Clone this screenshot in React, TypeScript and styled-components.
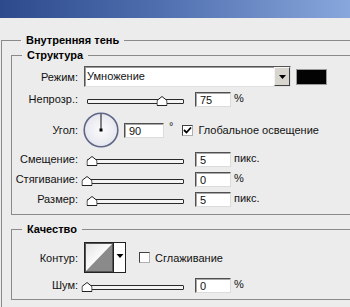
import styled, { createGlobalStyle } from "styled-components";

const GlobalStyle = createGlobalStyle`
  html, body { margin: 0; padding: 0; }
  body {
    background: #ececec;
    font-family: "Liberation Sans", Arial, sans-serif;
    font-size: 11px;
    color: #111;
  }
`;

const Window = styled.div`
  width: 350px;
  height: 307px;
  overflow: hidden;
  background: #ececec;
  display: flex;
  flex-direction: column;
`;

const TitleBar = styled.div`
  height: 18px;
  flex: none;
  background: linear-gradient(to right, #2d4b8c 0%, #4e6eae 45%, #88a7dc 100%);
`;

const Body = styled.div`
  width: 420px;
  padding: 16px 0 0 1px;
`;

const Group = styled.fieldset<{ $top?: number; $pt?: number; $pb?: number; $pl?: number }>`
  margin: ${(p) => p.$top ?? 0}px 0 0 0;
  padding: ${(p) => p.$pt ?? 0}px 0 ${(p) => p.$pb ?? 0}px ${(p) => p.$pl ?? 0}px;
  border: 1px solid #8a8a8a;
  border-right: none;
  min-width: 0;
`;

const Legend = styled.legend`
  margin-left: 10px;
  padding: 0 5px;
  font-weight: bold;
  line-height: 13px;
  color: #000;
`;

const Rows = styled.div<{ $gap?: number }>`
  display: flex;
  flex-direction: column;
  gap: ${(p) => p.$gap ?? 0}px;
`;

const Row = styled.div<{ $h: number }>`
  display: flex;
  align-items: center;
  height: ${(p) => p.$h}px;
`;

const Label = styled.span`
  flex: none;
  width: 66px;
  margin-right: 6px;
  text-align: right;
  white-space: nowrap;
`;

const Select = styled.div`
  box-sizing: border-box;
  width: 207px;
  height: 21px;
  display: flex;
  border: 1px solid;
  border-color: #555 #e0e0e0 #e0e0e0 #555;
  box-shadow: inset 1px 1px 0 #9a9a9a;
  background: #fff;
`;

const SelectText = styled.span`
  flex: 1;
  padding: 3px 0 0 2px;
`;

const DropButton = styled.span`
  box-sizing: border-box;
  width: 16px;
  background: #d8d5cf;
  border: 1px solid;
  border-color: #f4f4f4 #404040 #404040 #f4f4f4;
  display: flex;
  align-items: center;
  justify-content: center;
`;

const Swatch = styled.div`
  box-sizing: border-box;
  width: 31px;
  height: 16px;
  margin-left: 5px;
  background: #030303;
  border: 1px solid #9a9a9a;
`;

const Slider = styled.div`
  position: relative;
  flex: none;
  width: 97px;
  height: 18px;
  margin-left: 3px;
`;

const Track = styled.div`
  box-sizing: border-box;
  margin-top: 9px;
  height: 5px;
  border: 1px solid #2a2a2a;
  border-radius: 1px;
  background: #f4f4f4;
`;

const Thumb = styled.svg`
  position: absolute;
  top: 6px;
  transform: translateX(-50%);
`;

const Field = styled.div<{ $w: number; $ml: number }>`
  box-sizing: border-box;
  flex: none;
  width: ${(p) => p.$w}px;
  height: 15px;
  margin-left: ${(p) => p.$ml}px;
  padding: 1px 0 0 4px;
  background: #fff;
  border: 1px solid;
  border-color: #505050 #dcdcdc #dcdcdc #505050;
  box-shadow: inset 1px 1px 0 #a8a8a8;
  line-height: 12px;
`;

const Unit = styled.span<{ $raised?: boolean }>`
  margin-left: ${(p) => (p.$raised ? 5 : 3)}px;
  margin-bottom: ${(p) => (p.$raised ? 8 : 3)}px;
`;

const Dial = styled.svg`
  flex: none;
  margin-left: -1px;
`;

const Check = styled.span<{ $ml: number }>`
  box-sizing: border-box;
  flex: none;
  width: 11px;
  height: 11px;
  margin-left: ${(p) => p.$ml}px;
  margin-right: 5px;
  background: #fff;
  border: 1px solid;
  border-color: #404040 #b0b0b0 #b0b0b0 #404040;
  display: flex;
  align-items: center;
  justify-content: center;
`;

const Contour = styled.svg`
  flex: none;
`;

function SliderBar({ value }: { value: number }) {
  return (
    <Slider>
      <Track />
      <Thumb width="11" height="10" viewBox="0 0 11 10" style={{ left: `${value}%` }}>
        <path d="M0.5 9.5 V4.5 L5.5 0.5 L10.5 4.5 V9.5 Z" fill="#fff" stroke="#222" />
      </Thumb>
    </Slider>
  );
}

function CheckMark() {
  return (
    <svg width="9" height="9" viewBox="0 0 9 9">
      <path d="M1 4 L3.5 6.5 L8 1.5" fill="none" stroke="#000" strokeWidth="1.8" />
    </svg>
  );
}

export default function App() {
  return (
    <Window>
      <GlobalStyle />
      <TitleBar />
      <Body>
        <Group $pt={2} $pl={9} $pb={20}>
          <Legend>Внутренняя тень</Legend>

          <Group $pt={4} $pb={6}>
            <Legend>Структура</Legend>
            <Rows>
              <Row $h={21}>
                <Label>Режим:</Label>
                <Select>
                  <SelectText>Умножение</SelectText>
                  <DropButton>
                    <svg width="7" height="4" viewBox="0 0 7 4">
                      <path d="M0 0 H7 L3.5 4 Z" fill="#000" />
                    </svg>
                  </DropButton>
                </Select>
                <Swatch />
              </Row>
              <Row $h={18} style={{ marginTop: 3 }}>
                <Label>Непрозр.:</Label>
                <SliderBar value={77} />
                <Field $w={36} $ml={11}>75</Field>
                <Unit>%</Unit>
              </Row>
              <Row $h={38} style={{ marginTop: 3 }}>
                <Label>Угол:</Label>
                <Dial width="36" height="36" viewBox="0 0 36 36">
                  <defs>
                    <radialGradient id="dialFill" cx="50%" cy="50%" r="50%">
                      <stop offset="0%" stopColor="#fbfbfd" />
                      <stop offset="100%" stopColor="#e6e7ee" />
                    </radialGradient>
                  </defs>
                  <circle cx="18" cy="18" r="16.8" fill="url(#dialFill)" stroke="#5f6688" strokeWidth="1.6" />
                  <line x1="18" y1="18" x2="18" y2="2" stroke="#111" strokeWidth="1" />
                  <rect x="16.5" y="16.5" width="3" height="3" fill="#000" />
                </Dial>
                <Field $w={40} $ml={5}>90</Field>
                <Unit $raised>°</Unit>
                <Check $ml={9}>
                  <CheckMark />
                </Check>
                <span>Глобальное освещение</span>
              </Row>
              <Row $h={18} style={{ marginTop: 1 }}>
                <Label>Смещение:</Label>
                <SliderBar value={5} />
                <Field $w={36} $ml={11}>5</Field>
                <Unit>пикс.</Unit>
              </Row>
              <Row $h={18} style={{ marginTop: 2 }}>
                <Label>Стягивание:</Label>
                <SliderBar value={0} />
                <Field $w={36} $ml={11}>0</Field>
                <Unit>%</Unit>
              </Row>
              <Row $h={18} style={{ marginTop: 2 }}>
                <Label>Размер:</Label>
                <SliderBar value={5} />
                <Field $w={36} $ml={11}>5</Field>
                <Unit>пикс.</Unit>
              </Row>
            </Rows>
          </Group>

          <Group $top={8} $pt={6} $pb={7}>
            <Legend>Качество</Legend>
            <Rows $gap={5}>
              <Row $h={31}>
                <Label>Контур:</Label>
                <Contour width="42" height="31" viewBox="0 0 42 31">
                  <defs>
                    <linearGradient id="ctBg" x1="0" y1="0" x2="1" y2="1">
                      <stop offset="0%" stopColor="#e4e4e4" />
                      <stop offset="60%" stopColor="#ffffff" />
                    </linearGradient>
                  </defs>
                  <rect x="0.5" y="0.5" width="41" height="30" fill="#fff" stroke="#222" />
                  <rect x="1.5" y="1.5" width="27" height="28" fill="url(#ctBg)" stroke="#555" />
                  <path d="M2 29 L28 2 V29 Z" fill="#8a8a8a" />
                  <line x1="29.5" y1="1" x2="29.5" y2="30" stroke="#222" />
                  <path d="M32.5 12 H39.5 L36 16 Z" fill="#000" />
                </Contour>
                <Check $ml={13} />
                <span>Сглаживание</span>
              </Row>
              <Row $h={14}>
                <Label>Шум:</Label>
                <SliderBar value={0} />
                <Field $w={36} $ml={11}>0</Field>
                <Unit>%</Unit>
              </Row>
            </Rows>
          </Group>
        </Group>
      </Body>
    </Window>
  );
}
